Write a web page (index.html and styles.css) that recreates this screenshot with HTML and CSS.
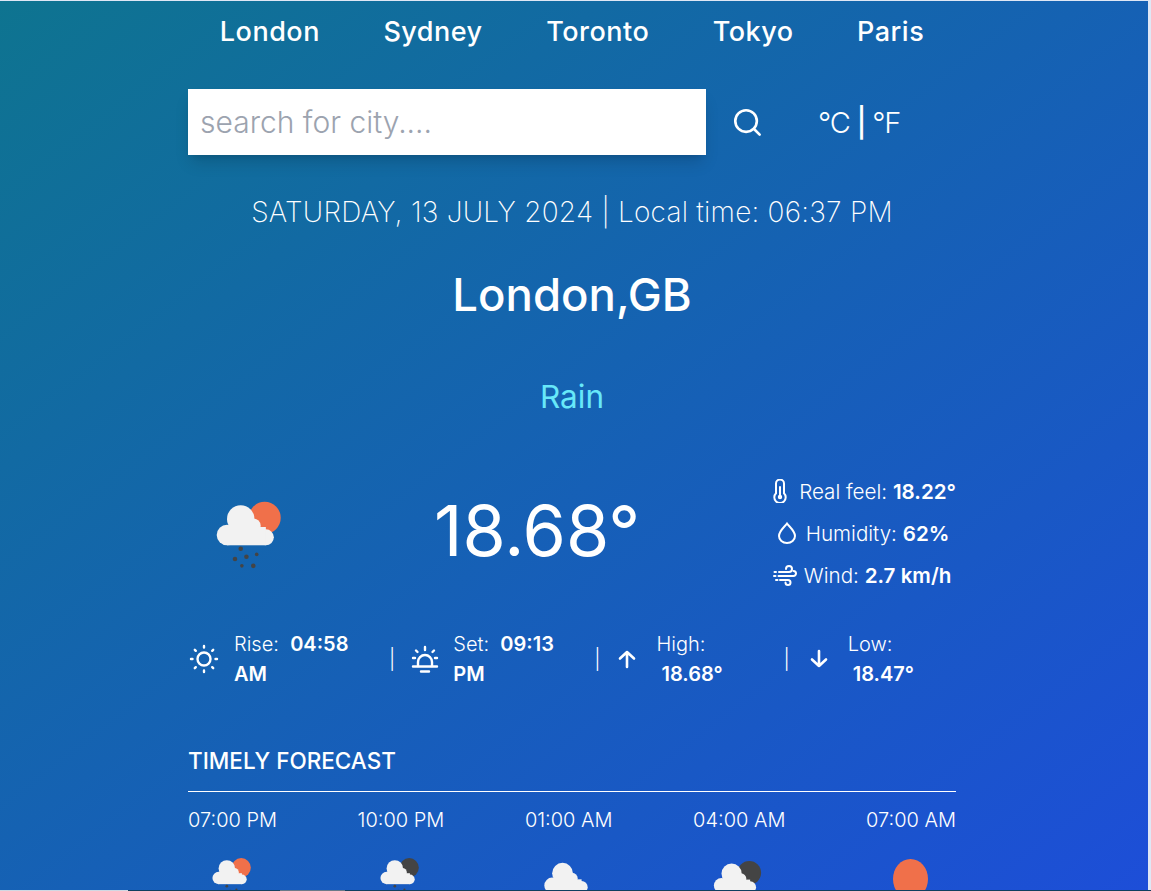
FILE: index.html
```html
<!DOCTYPE html>
<html lang="en">
<head>
  <meta charset="UTF-8">
  <meta name="viewport" content="width=device-width, initial-scale=1.0">
  <title>Weather</title>
  <link rel="stylesheet" href="styles.css">
</head>
<body>
  <div id="root">
    <nav class="cities">
      <button>London</button>
      <button>Sydney</button>
      <button>Toronto</button>
      <button>Tokyo</button>
      <button>Paris</button>
    </nav>

    <div class="searchRow">
      <input class="searchInput" type="text" placeholder="search for city....">
      <svg class="searchIcon" viewBox="0 0 32 32" fill="none" stroke="#fff" stroke-width="2.8" stroke-linecap="round">
        <circle cx="15" cy="15" r="11.5"/>
        <path d="M23.5 23.5l6 6"/>
      </svg>
      <div class="units">°C <b>|</b> °F</div>
    </div>

    <p class="dateLine">SATURDAY, 13 JULY 2024 | Local time: 06:37 PM</p>
    <h1 class="cityName">London,GB</h1>
    <p class="condition">Rain</p>

    <div class="current">
      <svg class="bigIcon" viewBox="0 0 70 70">
        <use href="#sunDisc"/>
        <use href="#cloud"/>
        <use href="#rain"/>
      </svg>
      <div class="temp">18.68°</div>
      <div class="details">
        <div class="detail">
          <svg class="detailIcon" viewBox="0 0 24 24" fill="none" stroke="#fff" stroke-width="2" stroke-linecap="round">
            <path d="M8 4.500a4 4 0 0 1 8 0v9.800a5.700 5.700 0 1 1-8 0z"/>
            <path d="M12 8v9"/>
            <circle cx="12" cy="18" r="1.200"/>
          </svg>
          <span>Real feel: <b>18.22°</b></span>
        </div>
        <div class="detail">
          <svg class="detailIcon" viewBox="0 0 24 24" fill="none" stroke="#fff" stroke-width="2">
            <path d="M12 2.500c3 4 8 7.500 8 12.500a8 7 0 0 1-16 0c0-5 5-8.500 8-12.500z"/>
          </svg>
          <span>Humidity: <b>62%</b></span>
        </div>
        <div class="detail">
          <svg class="detailIcon" viewBox="0 0 24 24" fill="none" stroke="#fff" stroke-width="2" stroke-linecap="round">
            <path d="M1.500 9h1.500M6 9h10a3 3 0 1 0-3-3"/>
            <path d="M1 13h1.500M5.500 13h15a2.500 2.500 0 0 0 0-5"/>
            <path d="M3 17h1.500M7 17h8a2.500 2.500 0 1 1-2.500 2.500"/>
          </svg>
          <span>Wind: <b>2.7 km/h</b></span>
        </div>
      </div>
    </div>

    <div class="astro">
      <svg class="astroIcon" viewBox="0 0 32 32" fill="none" stroke="#fff" stroke-width="2.4" stroke-linecap="round">
        <circle cx="16" cy="16" r="6.500"/>
        <path d="M16 3v1.500M16 27.500V29M3 16h1.500M27.500 16H29M6.800 6.800l1 1M24.200 24.200l1 1M6.800 25.200l1-1M24.200 7.800l1-1"/>
      </svg>
      <div class="astroText astroRise">Rise: &nbsp;<b>04:58</b><br><b>AM</b></div>
      <span class="sep">|</span>
      <svg class="astroIcon" viewBox="0 0 32 32" fill="none" stroke="#fff" stroke-width="2.4" stroke-linecap="round">
        <path d="M9 23v-4a7 7 0 0 1 14 0v4"/>
        <path d="M4 23.500h24M12 28.500h8M16 4v3M4 15h2M26 15h2M7 7.500l1.500 1.500M23.500 9L25 7.500"/>
      </svg>
      <div class="astroText astroSet">Set: &nbsp;<b>09:13</b><br><b>PM</b></div>
      <span class="sep">|</span>
      <svg class="arrowIcon" viewBox="0 0 24 24" fill="none" stroke="#fff" stroke-width="2.6" stroke-linecap="round" stroke-linejoin="round">
        <path d="M12 20V5M5 11.500L12 5l7 6.500"/>
      </svg>
      <div class="astroText astroHigh">High:<br><b>&nbsp;18.68°</b></div>
      <span class="sep">|</span>
      <svg class="arrowIcon arrowLow" viewBox="0 0 24 24" fill="none" stroke="#fff" stroke-width="2.6" stroke-linecap="round" stroke-linejoin="round">
        <path d="M12 4v15M5 12.500L12 19l7-6.500"/>
      </svg>
      <div class="astroText astroLow">Low:<br><b>&nbsp;18.47°</b></div>
    </div>

    <h2 class="forecastTitle">TIMELY FORECAST</h2>
    <div class="forecast">
      <div class="slot">
        <span>07:00 PM</span>
        <svg class="slotIcon" viewBox="0 0 70 70"><use href="#sunDisc"/><use href="#cloud"/><use href="#rain"/></svg>
      </div>
      <div class="slot">
        <span>10:00 PM</span>
        <svg class="slotIcon" viewBox="0 0 70 70"><use href="#moonDisc"/><use href="#cloud"/><use href="#rain"/></svg>
      </div>
      <div class="slot">
        <span>01:00 AM</span>
        <svg class="slotIcon cloudOnly" viewBox="4 8 52 60"><use href="#cloud"/></svg>
      </div>
      <div class="slot">
        <span>04:00 AM</span>
        <svg class="slotIcon cloudMoon" viewBox="4 0 58 70"><use href="#moonDisc"/><use href="#cloud"/></svg>
      </div>
      <div class="slot">
        <span>07:00 AM</span>
        <svg class="slotIcon sunOnly" viewBox="0 0 35 48"><ellipse cx="17.500" cy="20" rx="17.500" ry="20" fill="#f0704a"/></svg>
      </div>
    </div>
  </div>

  <svg class="defs" width="0" height="0">
    <defs>
      <circle id="sunDisc" cx="47" cy="20" r="14" fill="#f0704a"/>
      <circle id="moonDisc" cx="47" cy="20" r="14" fill="#444"/>
      <g id="cloud" fill="#f2f2f2">
        <circle cx="14" cy="35" r="9"/>
        <circle cx="26" cy="21" r="12"/>
        <circle cx="37" cy="27" r="6.500"/>
        <circle cx="48" cy="37" r="7"/>
        <rect x="14" y="28" width="34" height="16"/>
      </g>
      <g id="rain" fill="#444">
        <circle cx="26" cy="47" r="2"/>
        <circle cx="21" cy="56" r="2"/>
        <circle cx="31" cy="54" r="2"/>
        <circle cx="40" cy="52" r="1.600"/>
        <circle cx="27" cy="62" r="1.600"/>
        <circle cx="37" cy="62" r="2"/>
      </g>
    </defs>
  </svg>
</body>
</html>
```

FILE: styles.css
```css
* {
  box-sizing: border-box;
  font-family: Inter, "Open Sans", sans-serif;
}
html {
  height: 100%;
  overflow: hidden;
  background-color: #dfe7f5;
  background-image: linear-gradient(to right, #cfd8e3 128px, #10405f 128px, #10405f 280px, #6a7a88 280px, #6a7a88 345px, #10405f 345px);
  background-size: 100% 1px;
  background-position: bottom;
  background-repeat: no-repeat;
}
body {
  margin: 1px 0 0;
  height: 889px;
  width: 1148px;
  overflow: hidden;
  color: #fff;
  background: linear-gradient(to bottom right, #0e7490, #1d4ed8);
}
#root {
  width: 768px;
  margin: 0 auto;
  position: relative;
  left: -2px;
}
.cities {
  display: flex;
  justify-content: center;
  gap: 63.5px;
  padding-top: 15px;
}
.cities button {
  background: none;
  border: 0;
  padding: 0;
  color: #fff;
  font-size: 27px;
  font-weight: 500;
  letter-spacing: .5px;
  line-height: 32px;
}
.searchRow {
  display: flex;
  align-items: center;
  margin-top: 41px;
  height: 66px;
}
.searchInput {
  width: 518px;
  height: 66px;
  border: 0;
  outline: 0;
  padding: 0 12px;
  font-size: 30px;
  font-weight: 300;
  background: #fff;
  box-shadow: 0 10px 15px -3px rgba(0,0,0,.15), 0 4px 6px -4px rgba(0,0,0,.15);
}
.searchInput::placeholder {
  color: #9ca3af;
}
.searchIcon {
  width: 30px;
  height: 30px;
  margin-left: 26px;
}
.units {
  margin-left: 56px;
  font-size: 29px;
  font-weight: 300;
  letter-spacing: -1.2px;
}
.units b {
  font-weight: 500;
}
.dateLine {
  margin: 37px 0 0;
  text-align: center;
  font-size: 28px;
  font-weight: 200;
  letter-spacing: .23px;
  line-height: 40px;
}
.cityName {
  margin: 39px 0 0;
  text-align: center;
  font-size: 45.5px;
  font-weight: 500;
  line-height: 48px;
}
.condition {
  margin: 60px 0 0;
  text-align: center;
  color: #67e8f9;
  font-size: 31.5px;
  line-height: 36px;
}
.current {
  display: flex;
  align-items: center;
  justify-content: space-between;
  margin-top: 60px;
}
.bigIcon {
  width: 80px;
  height: 80px;
  margin-left: 23px;
  margin-top: 4px;
}
.temp {
  font-size: 70px;
  font-weight: 400;
  margin-left: 15px;
  padding-bottom: 6px;
}
.details {
  display: flex;
  flex-direction: column;
  align-items: center;
  gap: 10px;
  font-size: 20.6px;
  font-weight: 300;
}
.detail {
  display: flex;
  align-items: center;
  gap: 7px;
  height: 32px;
}
.detail b {
  font-weight: 600;
}
.detailIcon {
  width: 24px;
  height: 24px;
}
.astro {
  display: flex;
  align-items: center;
  margin-top: 38px;
  font-size: 20px;
  font-weight: 300;
  line-height: 30px;
}
.astro b {
  font-weight: 600;
}
.astroIcon {
  width: 32px;
  height: 32px;
  flex: none;
}
.arrowIcon {
  width: 24px;
  height: 24px;
  flex: none;
}
.arrowLow {
  margin-left: 3px;
}
.astroText {
  flex: none;
  margin-left: 14px;
}
.astroRise { width: 141px; }
.astroSet { width: 127px; margin-left: 12px; }
.astroHigh { width: 113px; margin-left: 18px; }
.astroLow { width: 108px; margin-left: 17px; }
.sep {
  margin: 0 14px;
}
.forecastTitle {
  margin: 56px 0 0;
  font-size: 22.5px;
  font-weight: 500;
  line-height: 32px;
}
.forecast {
  display: flex;
  justify-content: space-between;
  margin-top: 14px;
  padding-top: 14px;
  border-top: 1px solid #fff;
}
.slot {
  display: flex;
  flex-direction: column;
  align-items: center;
  font-size: 20px;
  font-weight: 300;
  line-height: 28px;
}
.slotIcon {
  width: 48px;
  height: 48px;
  margin-top: 20px;
}
.cloudOnly {
  width: 46px;
  height: 52px;
  margin-top: 28px;
  margin-right: 5px;
}
.cloudMoon {
  width: 49px;
  height: 59px;
  margin-top: 22px;
  margin-right: 4px;
}
.sunOnly {
  width: 35px;
  margin-top: 25px;
}
.defs {
  position: absolute;
}
```
